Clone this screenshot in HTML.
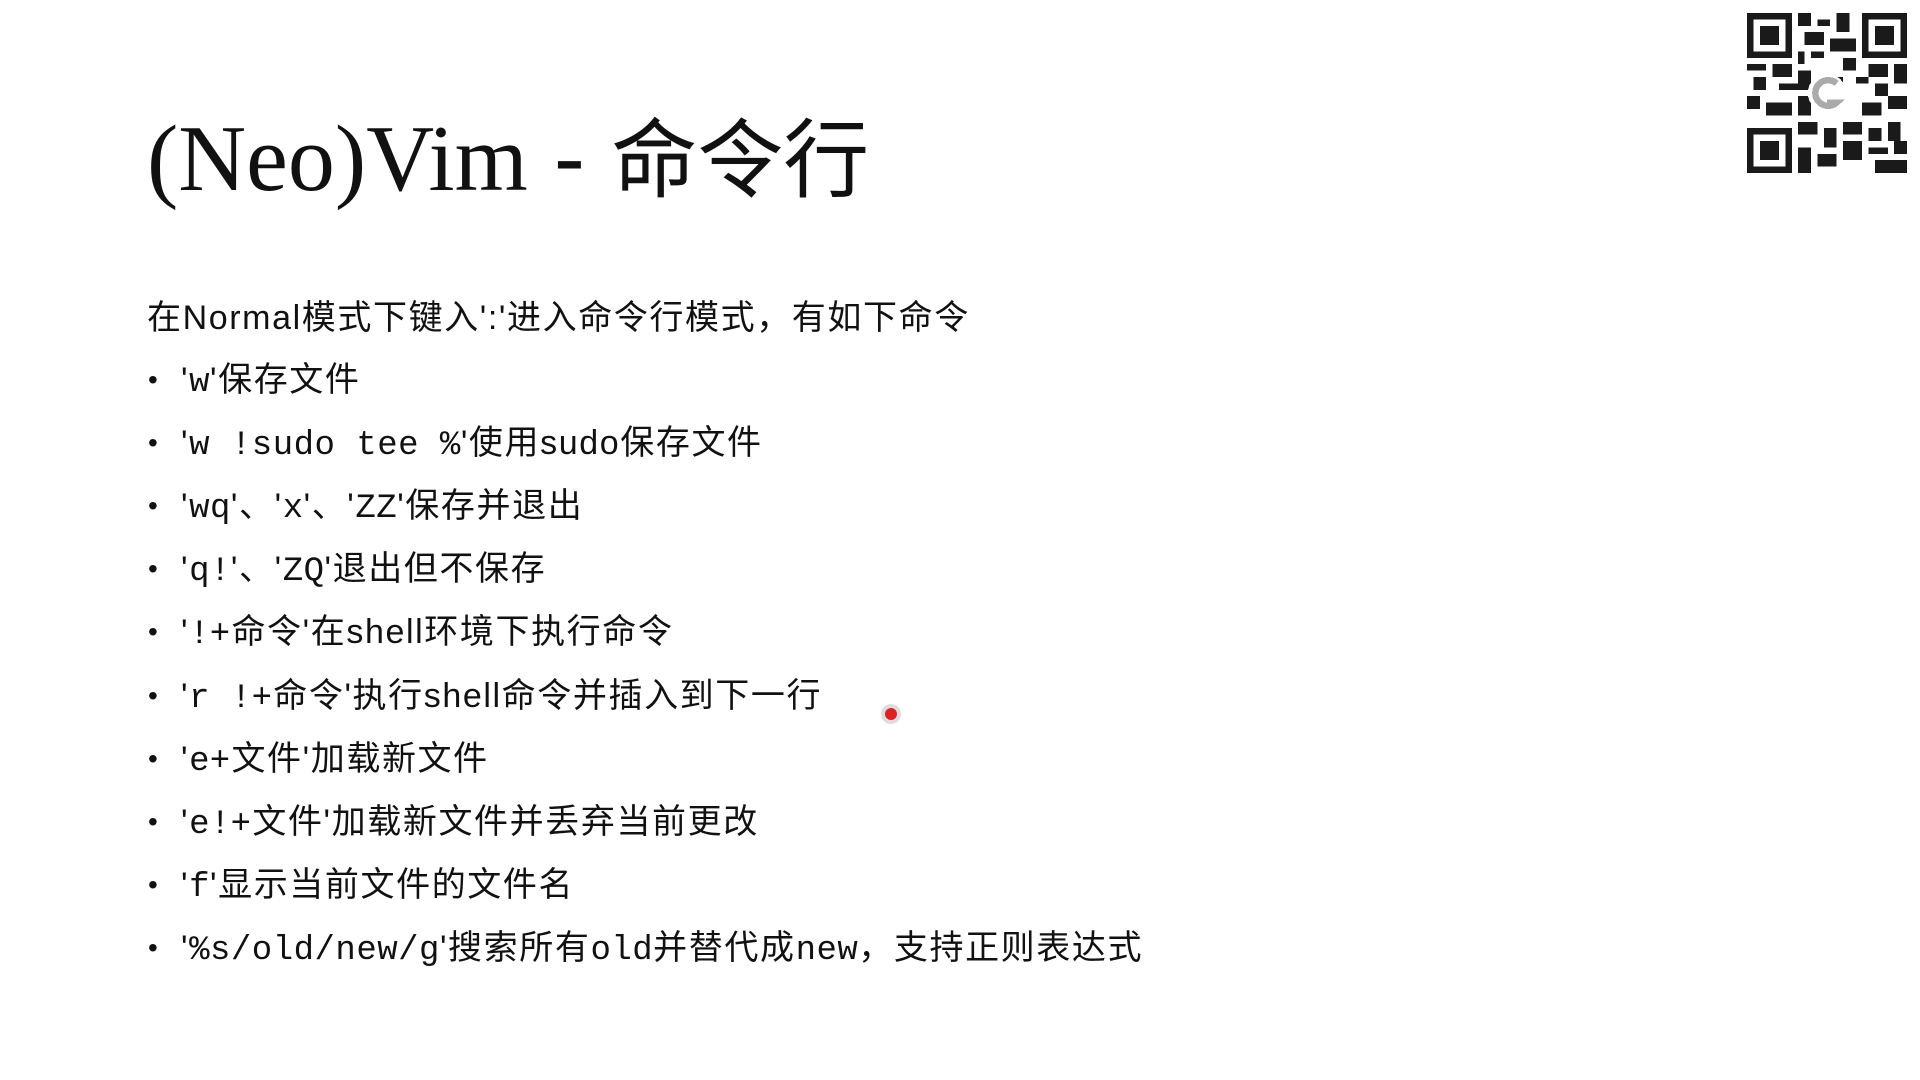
<!DOCTYPE html>
<html><head><meta charset="utf-8"><style>
body{margin:0;width:1920px;height:1080px;background:#fff;position:relative;overflow:hidden;font-family:"Liberation Sans","Noto Sans CJK SC",sans-serif;color:#111}
.t{position:absolute;left:147px;top:98px;font-size:94px;line-height:120px;white-space:nowrap}
.t .s{font-family:"Liberation Serif",serif}
.t .c{font-size:86px}
.l{position:absolute;font-size:34px;line-height:40px;white-space:nowrap;letter-spacing:1.6px}
.m{font-family:"Liberation Mono",monospace;font-size:34px;letter-spacing:0.5px}
.b{position:absolute;left:148px;font-size:28px;line-height:40px}
</style></head><body>
<div class="t"><span class="s">(Neo)Vim</span> - <span class="c">命令行</span></div>
<div class="l" style="left:147px;top:298px">在Normal模式下键入':'进入命令行模式，有如下命令</div>

<div class="b" style="top:360px">•</div><div class="l" style="left:181px;top:360px">'<span class="m">w</span>'保存文件</div>
<div class="b" style="top:423px">•</div><div class="l" style="left:181px;top:423px">'<span class="m">w !sudo tee %</span>'使用sudo保存文件</div>
<div class="b" style="top:486px">•</div><div class="l" style="left:181px;top:486px">'<span class="m">wq</span>'、'<span class="m">x</span>'、'<span class="m">ZZ</span>'保存并退出</div>
<div class="b" style="top:549px">•</div><div class="l" style="left:181px;top:549px">'<span class="m">q!</span>'、'<span class="m">ZQ</span>'退出但不保存</div>
<div class="b" style="top:612px">•</div><div class="l" style="left:181px;top:612px">'<span class="m">!</span>+命令'在shell环境下执行命令</div>
<div class="b" style="top:676px">•</div><div class="l" style="left:181px;top:676px">'<span class="m">r !</span>+命令'执行shell命令并插入到下一行</div>
<div class="b" style="top:739px">•</div><div class="l" style="left:181px;top:739px">'<span class="m">e</span>+文件'加载新文件</div>
<div class="b" style="top:802px">•</div><div class="l" style="left:181px;top:802px">'<span class="m">e!</span>+文件'加载新文件并丢弃当前更改</div>
<div class="b" style="top:865px">•</div><div class="l" style="left:181px;top:865px">'<span class="m">f</span>'显示当前文件的文件名</div>
<div class="b" style="top:928px">•</div><div class="l" style="left:181px;top:928px">'<span class="m">%s/old/new/g</span>'搜索所有<span class="m">old</span>并替代成<span class="m">new</span>，支持正则表达式</div>

<div style="position:absolute;left:885px;top:708px;width:12px;height:12px;border-radius:50%;background:#d22;box-shadow:0 0 0 4px #ddd"></div>

<svg style="position:absolute;left:1746px;top:13px" width="162" height="160" viewBox="0 0 25 25" shape-rendering="crispEdges">
<rect width="25" height="25" fill="#fff"/>
<g fill="#1a1a1a">
<path d="M0 0h7v7h-7zM1 1v5h5v-5zM2 2h3v3h-3z" fill-rule="evenodd"/>
<path d="M18 0h7v7h-7zM19 1v5h5v-5zM20 2h3v3h-3z" fill-rule="evenodd"/>
<path d="M0 18h7v7h-7zM1 19v5h5v-5zM2 20h3v3h-3z" fill-rule="evenodd"/>
<path d="M8 0h2v2h-2zM11 1h2v1h-2zM14 0h2v3h-2zM9 3h3v2h-3zM13 4h4v2h-4zM8 6h1v2h-1zM10 6h2v1h-2zM15 7h2v2h-2zM0 8h3v1h-3zM4 8h3v2h-3zM1 10h2v2h-2zM5 11h3v1h-3zM19 8h3v2h-3zM23 8h2v3h-2zM20 11h2v2h-2zM17 10h2v1h-2zM0 13h2v2h-2zM3 14h4v2h-4zM18 14h3v2h-3zM22 13h3v2h-3zM8 17h3v2h-3zM12 18h2v3h-2zM15 17h3v2h-3zM19 18h2v2h-2zM22 17h2v3h-2zM8 21h2v4h-2zM11 22h3v2h-3zM15 20h3v3h-3zM19 21h3v1h-3zM20 23h5v2h-5zM23 20h2v2h-2zM8 9h2v3h-2zM8 13h2v3h-2zM14 10h1v1h-1z"/>
</g>
<circle cx="12.5" cy="12.5" r="3" fill="#fff"/>
<path d="M14 11a2 2 0 1 0 0 3h-1.5" stroke="#aaa" stroke-width="1" fill="none"/>
</svg>
</body></html>
